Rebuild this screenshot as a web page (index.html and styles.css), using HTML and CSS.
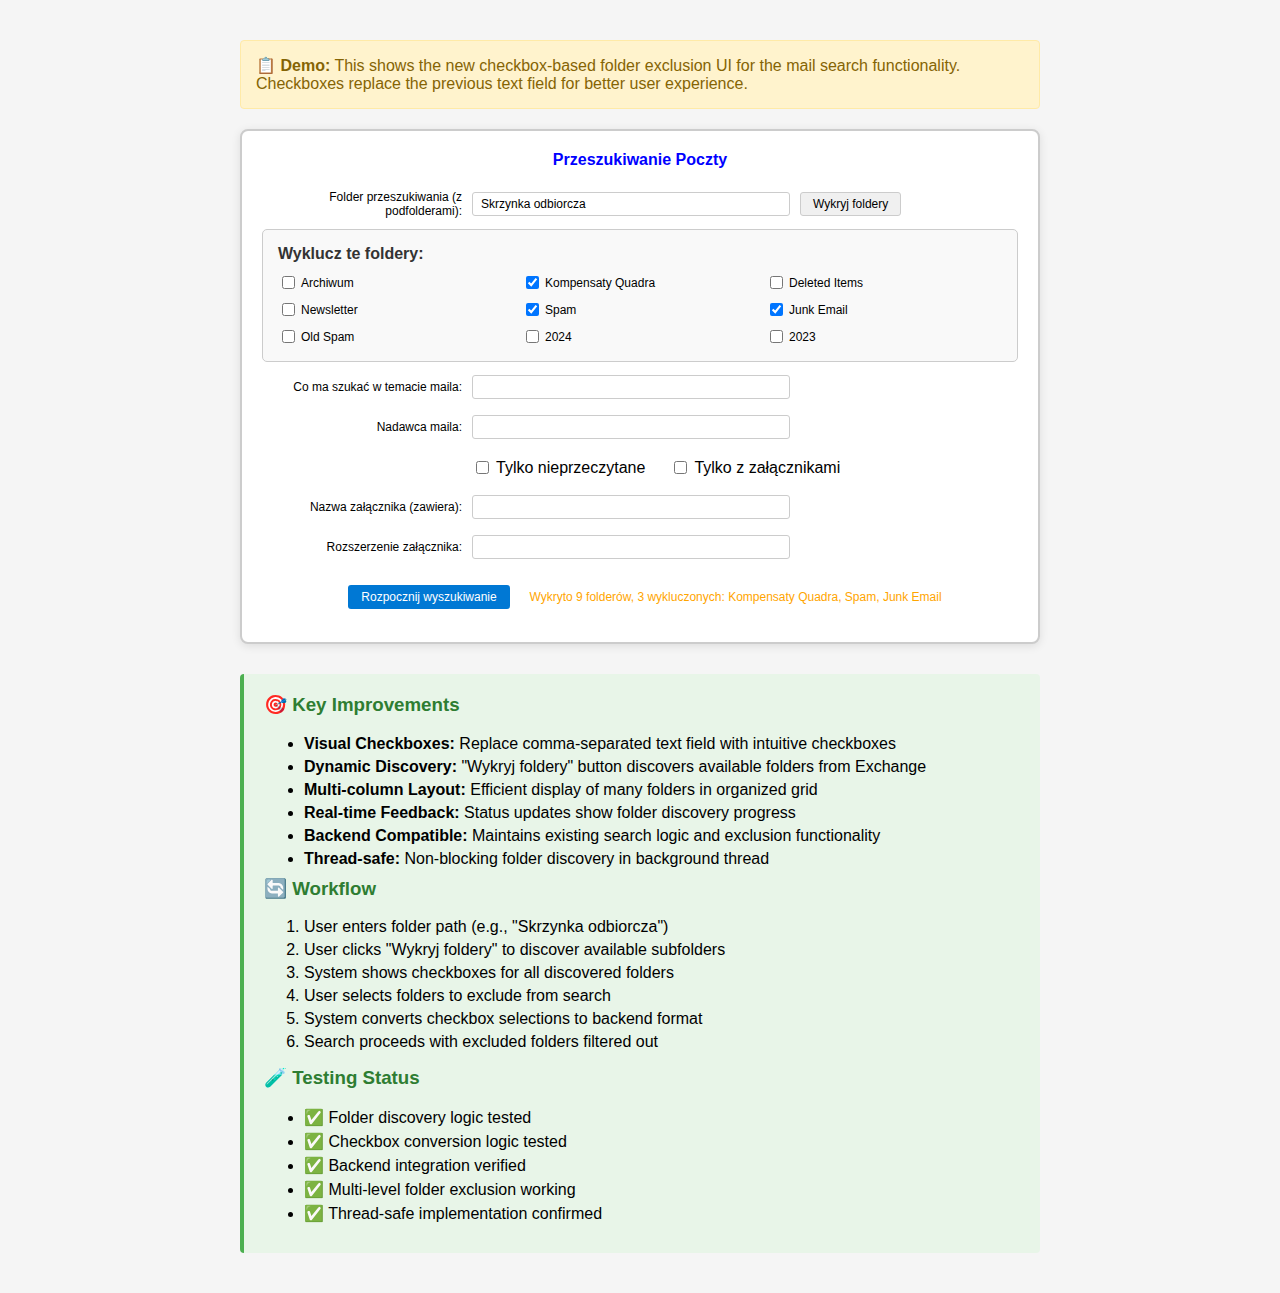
FILE: index.html
```html
<!DOCTYPE html>
<html>
<head>
  <meta charset="utf-8" />
  <title>Folder Exclusion Demo</title>
  <link rel="stylesheet" href="styles.css">
</head>
<body>
  <div class="container">
    <div class="demo-note">📋 <strong>Demo:</strong> This shows the new checkbox-based folder exclusion UI for the mail search functionality. Checkboxes replace the previous text field for better user experience.</div>

    <div class="search-card">
      <div class="card-title">Przeszukiwanie Poczty</div>

      <div class="form-row row-folder">
        <label class="row-label">Folder przeszukiwania (z podfolderami):</label>
        <input class="text-input" type="text" value="Skrzynka odbiorcza" />
        <button class="btn-detect">Wykryj foldery</button>
      </div>

      <div class="exclude-box">
        <div class="exclude-title">Wyklucz te foldery:</div>
        <div class="exclude-grid">
          <label class="folder-item"><input type="checkbox" /><span>Archiwum</span></label>
          <label class="folder-item"><input type="checkbox" checked /><span>Kompensaty Quadra</span></label>
          <label class="folder-item"><input type="checkbox" /><span>Deleted Items</span></label>
          <label class="folder-item"><input type="checkbox" /><span>Newsletter</span></label>
          <label class="folder-item"><input type="checkbox" checked /><span>Spam</span></label>
          <label class="folder-item"><input type="checkbox" checked /><span>Junk Email</span></label>
          <label class="folder-item"><input type="checkbox" /><span>Old Spam</span></label>
          <label class="folder-item"><input type="checkbox" /><span>2024</span></label>
          <label class="folder-item"><input type="checkbox" /><span>2023</span></label>
        </div>
      </div>

      <div class="form-row">
        <label class="row-label">Co ma szukać w temacie maila:</label>
        <input class="text-input" type="text" />
      </div>
      <div class="form-row">
        <label class="row-label">Nadawca maila:</label>
        <input class="text-input" type="text" />
      </div>

      <div class="check-row">
        <label class="check-option"><input type="checkbox" /><span>Tylko nieprzeczytane</span></label>
        <label class="check-option"><input type="checkbox" /><span>Tylko z załącznikami</span></label>
      </div>

      <div class="form-row">
        <label class="row-label">Nazwa załącznika (zawiera):</label>
        <input class="text-input" type="text" />
      </div>
      <div class="form-row">
        <label class="row-label">Rozszerzenie załącznika:</label>
        <input class="text-input" type="text" />
      </div>

      <div class="action-row">
        <button class="btn-search">Rozpocznij wyszukiwanie</button>
        <span class="status-text">Wykryto 9 folderów, 3 wykluczonych: Kompensaty Quadra, Spam, Junk Email</span>
      </div>
    </div>

    <div class="info-panel">
      <h3>🎯 Key Improvements</h3>
      <ul>
        <li><strong>Visual Checkboxes:</strong> Replace comma-separated text field with intuitive checkboxes</li>
        <li><strong>Dynamic Discovery:</strong> "Wykryj foldery" button discovers available folders from Exchange</li>
        <li><strong>Multi-column Layout:</strong> Efficient display of many folders in organized grid</li>
        <li><strong>Real-time Feedback:</strong> Status updates show folder discovery progress</li>
        <li><strong>Backend Compatible:</strong> Maintains existing search logic and exclusion functionality</li>
        <li><strong>Thread-safe:</strong> Non-blocking folder discovery in background thread</li>
      </ul>

      <h3>🔄 Workflow</h3>
      <ol>
        <li>User enters folder path (e.g., "Skrzynka odbiorcza")</li>
        <li>User clicks "Wykryj foldery" to discover available subfolders</li>
        <li>System shows checkboxes for all discovered folders</li>
        <li>User selects folders to exclude from search</li>
        <li>System converts checkbox selections to backend format</li>
        <li>Search proceeds with excluded folders filtered out</li>
      </ol>

      <h3>🧪 Testing Status</h3>
      <ul>
        <li>✅ Folder discovery logic tested</li>
        <li>✅ Checkbox conversion logic tested</li>
        <li>✅ Backend integration verified</li>
        <li>✅ Multi-level folder exclusion working</li>
        <li>✅ Thread-safe implementation confirmed</li>
      </ul>
    </div>
  </div>
</body>
</html>
```

FILE: styles.css
```css
body {
  font-family: "Liberation Sans", Arial, sans-serif;
  margin: 0;
  padding: 40px 20px;
  background-color: #f5f5f5;
}

.container {
  width: 800px;
  margin: 0 auto;
}

.demo-note {
  background-color: #fff3cd;
  border: 1px solid #ffeaa7;
  border-radius: 4px;
  color: #856404;
  font-size: 16px;
  padding: 15px;
  margin-bottom: 20px;
}

.search-card {
  background-color: #fff;
  border: 2px solid #ccc;
  border-radius: 8px;
  box-shadow: 0 2px 10px rgba(0, 0, 0, 0.1);
  padding: 20px;
  height: 515px;
  box-sizing: border-box;
  margin-bottom: 30px;
}

.card-title {
  color: #0000ff;
  font-size: 16px;
  font-weight: bold;
  text-align: center;
  margin-bottom: 21px;
}

.form-row {
  display: flex;
  align-items: center;
  gap: 10px;
  margin-bottom: 16px;
}

.row-folder {
  margin-bottom: 11px;
}

.row-label {
  width: 200px;
  flex: none;
  font-size: 12px;
  text-align: right;
  color: #000;
}

.text-input {
  width: 318px;
  height: 24px;
  box-sizing: border-box;
  border: 1px solid #ccc;
  border-radius: 3px;
  padding: 4px 8px;
  font-family: inherit;
  font-size: 12px;
  margin: 0;
}

.btn-detect {
  height: 24px;
  box-sizing: border-box;
  padding: 0 12px;
  background-color: #f0f0f0;
  border: 1px solid #ccc;
  border-radius: 3px;
  font-family: inherit;
  font-size: 12px;
  color: #000;
}

.exclude-box {
  background-color: #f9f9f9;
  border: 1px solid #ccc;
  border-radius: 5px;
  padding: 15px 15px 13px;
  margin-bottom: 13px;
}

.exclude-title {
  color: #333;
  font-size: 16px;
  font-weight: bold;
  margin-bottom: 9px;
}

.exclude-grid {
  display: grid;
  grid-template-columns: repeat(3, 1fr);
  gap: 5px 8px;
}

.folder-item {
  display: flex;
  align-items: center;
  font-size: 12px;
  padding: 4px;
  height: 22px;
  box-sizing: border-box;
}

.folder-item input,
.check-option input {
  width: 13px;
  height: 13px;
  margin: 0 6px 2px 0;
  flex: none;
}

.check-option input {
  margin-right: 7px;
}

.check-row {
  display: flex;
  gap: 29px;
  padding-left: 214px;
  padding-top: 1px;
  margin-bottom: 15px;
  height: 24px;
  align-items: center;
}

.check-option {
  display: flex;
  align-items: center;
  font-size: 16px;
}

.action-row {
  display: flex;
  align-items: center;
  padding-left: 86px;
  margin-top: 26px;
}

.btn-search {
  width: 162px;
  height: 24px;
  box-sizing: border-box;
  background-color: #0078d4;
  color: #fff;
  border: none;
  border-radius: 3px;
  padding: 0;
  font-family: inherit;
  font-size: 12px;
  margin-right: 19.5px;
}

.status-text {
  color: #ffa500;
  font-size: 12px;
}

.info-panel {
  background-color: #e8f5e8;
  border-left: 4px solid #4caf50;
  border-radius: 4px;
  padding: 20px;
}

.info-panel h3 {
  color: #2e7d32;
  font-size: 18.72px;
  margin: 0 0 18.72px;
}

.info-panel ul,
.info-panel ol {
  margin: 0;
  padding-left: 40px;
  font-size: 16px;
}

.info-panel ul {
  margin-bottom: 10px;
}

.info-panel ol {
  margin-bottom: 16px;
}

.info-panel li {
  color: #000;
  margin-bottom: 5px;
}
```
